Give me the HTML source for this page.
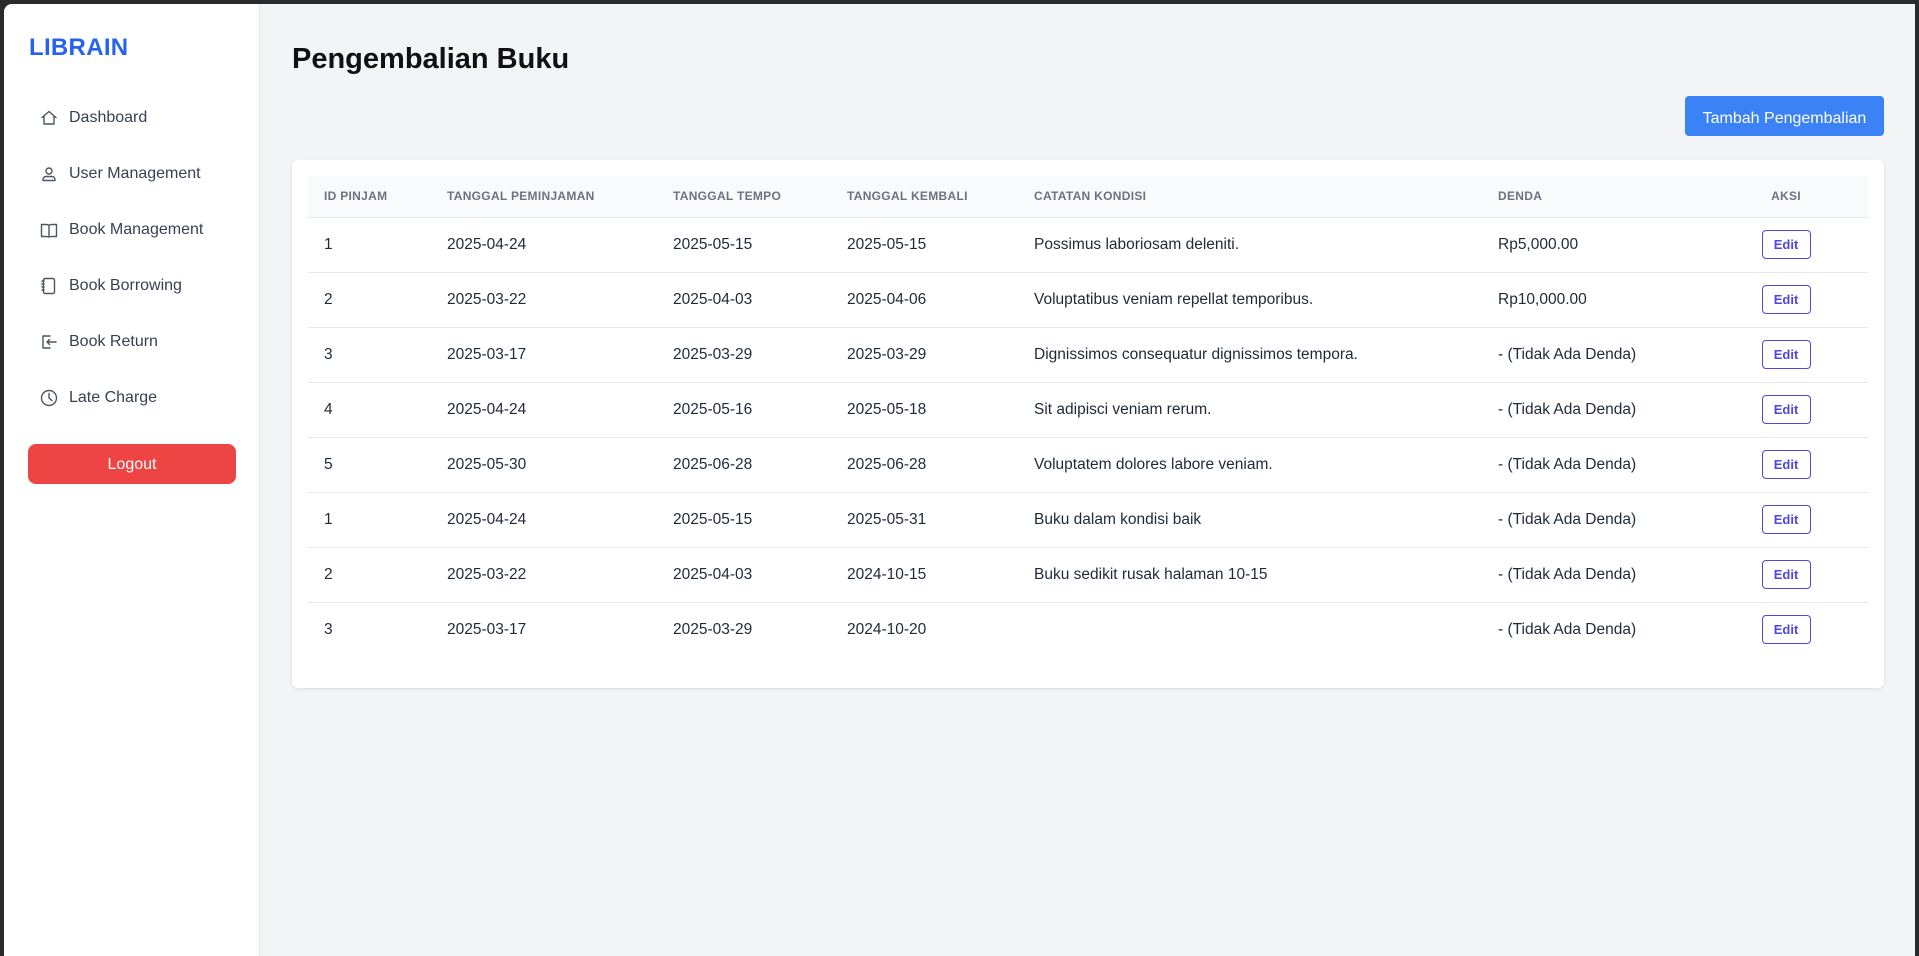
<!DOCTYPE html>
<html><head><meta charset="utf-8"><style>
*{box-sizing:border-box;margin:0;padding:0}
html,body{width:1919px;height:956px;overflow:hidden}
body{background:#2b2b2b;font-family:"Liberation Sans",sans-serif;position:relative}
.win{position:absolute;left:4px;top:4px;width:1911px;height:952px;background:#f3f4f6;border-top-left-radius:8px;overflow:hidden}
.side{position:absolute;left:0;top:0;width:256px;height:952px;background:#fff;border-right:1px solid #e5e7eb}
.logo{position:absolute;left:25px;top:30px;font-size:24px;font-weight:bold;color:#2563eb;letter-spacing:0.3px}
.nav{position:absolute;left:36px;font-size:16px;color:#374151;display:flex;align-items:center;height:24px}
.nav svg{width:18px;height:18px;margin-right:11px;stroke:#4b5563;fill:none;stroke-width:1.4;stroke-linecap:round;stroke-linejoin:round}
.logout{position:absolute;left:24px;top:440px;width:208px;height:40px;background:#ef4444;border-radius:8px;color:#fff;font-size:16px;text-align:center;line-height:42px}
h1{position:absolute;left:288px;top:39px;font-size:29px;font-weight:bold;color:#111}
.btn{position:absolute;left:1681px;top:92px;width:199px;height:40px;background:#3b82f6;border-radius:4px;color:#fff;font-size:16px;text-align:center;line-height:46px}
.card{position:absolute;left:288px;top:156px;width:1592px;height:528px;background:#fff;border-radius:6px;box-shadow:0 1px 3px rgba(0,0,0,.1)}
table{position:absolute;left:16px;top:16px;width:1560px;border-collapse:collapse}
th{background:#f9fafb;height:41px;font-size:12px;font-weight:bold;color:#6b7280;text-align:left;padding:0 16px;border-bottom:1px solid #e5e7eb;text-transform:uppercase;letter-spacing:.3px}
td{height:55px;font-size:15.5px;color:#1f2937;padding:0 16px;border-bottom:1px solid #e5e7eb}
tr:last-child td{border-bottom:none}
.c{text-align:center}
.edit{display:inline-block;width:49px;height:29px;border:1px solid #4f46e5;border-radius:4px;color:#4f46e5;font-size:13px;font-weight:bold;line-height:27px;text-align:center}
</style></head><body><div class="win">
<div class="side">
<div class="logo">LIBRAIN</div>
<div class="nav" style="top:102px"><svg viewBox="0 0 18 18"><path d="M2 8.5L9 2.5l7 6M4 7v8h10V7"/></svg>Dashboard</div>
<div class="nav" style="top:158px"><svg viewBox="0 0 18 18"><circle cx="9" cy="6" r="3"/><path d="M3 15.5v-1a3 3 0 0 1 3-3h6a3 3 0 0 1 3 3v1z"/></svg>User Management</div>
<div class="nav" style="top:214px"><svg viewBox="0 0 18 18"><path d="M9 4.5v11M1.5 3.5h4a3.5 2 0 0 1 3.5 1M16.5 3.5h-4a3.5 2 0 0 0-3.5 1M1.5 3.5v12h5l2.5 0.5 2.5-.5h5v-12"/></svg>Book Management</div>
<div class="nav" style="top:270px"><svg viewBox="0 0 18 18"><rect x="3.5" y="1.5" width="11" height="15" rx="1.5"/><path d="M2 4h2M2 7h2M2 10h2M2 13h2"/></svg>Book Borrowing</div>
<div class="nav" style="top:326px"><svg viewBox="0 0 18 18"><path d="M10 3H3v12h7M7 9h9M9.5 6.5L7 9l2.5 2.5"/></svg>Book Return</div>
<div class="nav" style="top:382px"><svg viewBox="0 0 18 18"><circle cx="9" cy="9" r="7.5"/><path d="M9 4.5V9l3 2.5"/></svg>Late Charge</div>
<div class="logout">Logout</div>
</div>
<h1>Pengembalian Buku</h1>
<div class="btn">Tambah Pengembalian</div>
<div class="card"><table>
<colgroup><col style="width:123px"><col style="width:226px"><col style="width:174px"><col style="width:187px"><col style="width:464px"><col style="width:222px"><col style="width:164px"></colgroup>
<tr><th>ID Pinjam</th><th>Tanggal Peminjaman</th><th>Tanggal Tempo</th><th>Tanggal Kembali</th><th>Catatan Kondisi</th><th>Denda</th><th class="c">Aksi</th></tr>
<tr><td>1</td><td>2025-04-24</td><td>2025-05-15</td><td>2025-05-15</td><td>Possimus laboriosam deleniti.</td><td>Rp5,000.00</td><td class="c"><span class="edit">Edit</span></td></tr>
<tr><td>2</td><td>2025-03-22</td><td>2025-04-03</td><td>2025-04-06</td><td>Voluptatibus veniam repellat temporibus.</td><td>Rp10,000.00</td><td class="c"><span class="edit">Edit</span></td></tr>
<tr><td>3</td><td>2025-03-17</td><td>2025-03-29</td><td>2025-03-29</td><td>Dignissimos consequatur dignissimos tempora.</td><td>- (Tidak Ada Denda)</td><td class="c"><span class="edit">Edit</span></td></tr>
<tr><td>4</td><td>2025-04-24</td><td>2025-05-16</td><td>2025-05-18</td><td>Sit adipisci veniam rerum.</td><td>- (Tidak Ada Denda)</td><td class="c"><span class="edit">Edit</span></td></tr>
<tr><td>5</td><td>2025-05-30</td><td>2025-06-28</td><td>2025-06-28</td><td>Voluptatem dolores labore veniam.</td><td>- (Tidak Ada Denda)</td><td class="c"><span class="edit">Edit</span></td></tr>
<tr><td>1</td><td>2025-04-24</td><td>2025-05-15</td><td>2025-05-31</td><td>Buku dalam kondisi baik</td><td>- (Tidak Ada Denda)</td><td class="c"><span class="edit">Edit</span></td></tr>
<tr><td>2</td><td>2025-03-22</td><td>2025-04-03</td><td>2024-10-15</td><td>Buku sedikit rusak halaman 10-15</td><td>- (Tidak Ada Denda)</td><td class="c"><span class="edit">Edit</span></td></tr>
<tr><td>3</td><td>2025-03-17</td><td>2025-03-29</td><td>2024-10-20</td><td></td><td>- (Tidak Ada Denda)</td><td class="c"><span class="edit">Edit</span></td></tr>
</table></div>
</div></body></html>
